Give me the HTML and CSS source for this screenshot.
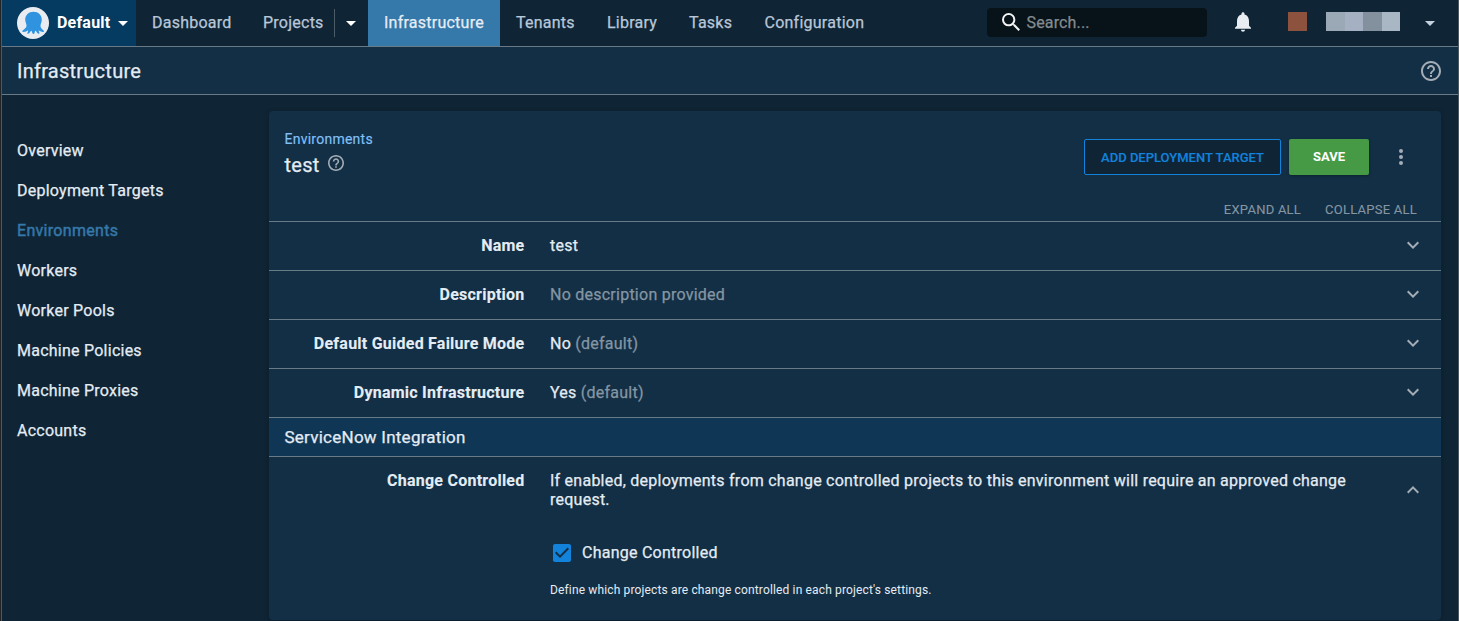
FILE: index.html
```html
<!DOCTYPE html>
<html lang="en">
<head>
<meta charset="utf-8">
<title>Infrastructure</title>
<link rel="stylesheet" href="styles.css">
</head>
<body>
<div class="app">
  <header class="nav">
    <div class="space">
      <svg class="logo" viewBox="0 0 32 32"><circle cx="16" cy="16" r="16" fill="#e9edf2"/><path fill="#2f93e0" d="M16.500 4.800c-4.900 0-8.300 3.500-8.300 7.700 0 2.700 1.500 4.300 1.300 6.500-.3 2.600-4.500 4.400-4.300 5.400.4.900 3.400.5 5.200-.7.700-.4.900 0 .6.700-.4 1.200-1.100 2.100-.4 2.400 1 .4 2.400-1.300 3.100-2.500.6-.9 1-.6 1.200.3.300 1.200.7 2.500 1.600 2.500s1.200-1.400 1.400-2.500c.2-.9.700-1.100 1.200-.3.700 1.200 2 2.800 3 2.400.7-.3.100-1.400-.4-2.600-.3-.7 0-.8.600-.3 1.700 1.200 4.300 1.500 4.700.6.200-1-3.200-2.600-3.500-5.200-.2-2.200 1.300-3.800 1.300-6.500C24.800 8.300 21.400 4.800 16.500 4.800z"/></svg>
      <span class="space-name">Default</span>
      <svg class="caret" viewBox="0 0 10 5"><path d="M0 0h10L5 5z"/></svg>
    </div>
    <nav class="links">
      <a class="link dashboard">Dashboard</a>
      <a class="link projects">Projects</a>
      <span class="projects-menu"><svg class="caret" viewBox="0 0 10 5"><path d="M0 0h10L5 5z"/></svg></span>
      <a class="link active">Infrastructure</a>
      <a class="link tenants">Tenants</a>
      <a class="link library">Library</a>
      <a class="link tasks">Tasks</a>
      <a class="link">Configuration</a>
    </nav>
    <div class="tools">
      <div class="search">
        <svg class="search-icon" viewBox="3 3 17.500 17.500"><path d="M15.500 14h-.79l-.28-.27A6.471 6.471 0 0 0 16 9.500 6.500 6.500 0 1 0 9.500 16c1.610 0 3.090-.59 4.230-1.570l.27.28v.79l5 4.990L20.490 19l-4.990-5zm-6 0C7.010 14 5 11.990 5 9.500S7.010 5 9.500 5 14 7.010 14 9.500 11.990 14 9.500 14z"/></svg>
        <span class="search-text">Search...</span>
      </div>
      <svg class="bell" viewBox="4 2.500 16 19.500"><path d="M12 22c1.100 0 2-.9 2-2h-4c0 1.100.89 2 2 2zm6-6v-5c0-3.070-1.640-5.640-4.500-6.320V4c0-.83-.67-1.500-1.500-1.500s-1.500.67-1.500 1.500v.68C7.630 5.360 6 7.920 6 11v5l-2 2v1h16v-1l-2-2z"/></svg>
      <span class="avatar"></span>
      <span class="user"><i class="tone-a"></i><i class="tone-b"></i><i class="tone-c"></i><i class="tone-d"></i></span>
      <svg class="caret user-caret" viewBox="0 0 10 5"><path d="M0 0h10L5 5z"/></svg>
    </div>
  </header>
  <div class="title-bar">
    <h1 class="title">Infrastructure</h1>
    <svg class="help" viewBox="2 2 20 20"><path d="M11 18h2v-2h-2v2zm1-16C6.480 2 2 6.480 2 12s4.480 10 10 10 10-4.480 10-10S17.520 2 12 2zm0 18c-4.410 0-8-3.590-8-8s3.590-8 8-8 8 3.590 8 8-3.590 8-8 8zm0-14c-2.210 0-4 1.790-4 4h2c0-1.100.9-2 2-2s2 .9 2 2c0 2-3 1.750-3 5h2c0-2.250 3-2.500 3-5 0-2.210-1.790-4-4-4z"/></svg>
  </div>
  <div class="content">
    <aside class="side">
      <a>Overview</a>
      <a>Deployment Targets</a>
      <a class="current">Environments</a>
      <a>Workers</a>
      <a>Worker Pools</a>
      <a>Machine Policies</a>
      <a>Machine Proxies</a>
      <a>Accounts</a>
    </aside>
    <main class="card">
      <div class="card-head">
        <div class="heading">
          <a class="crumb">Environments</a>
          <div class="name-line"><h2 class="name">test</h2>
            <svg class="help small" viewBox="2 2 20 20"><path d="M11 18h2v-2h-2v2zm1-16C6.480 2 2 6.480 2 12s4.480 10 10 10 10-4.480 10-10S17.520 2 12 2zm0 18c-4.410 0-8-3.590-8-8s3.590-8 8-8 8 3.590 8 8-3.590 8-8 8zm0-14c-2.210 0-4 1.790-4 4h2c0-1.100.9-2 2-2s2 .9 2 2c0 2-3 1.750-3 5h2c0-2.250 3-2.500 3-5 0-2.210-1.790-4-4-4z"/></svg>
          </div>
        </div>
        <div class="actions">
          <button class="btn outline">ADD DEPLOYMENT TARGET</button>
          <button class="btn save">SAVE</button>
          <svg class="more" viewBox="0 0 4 16"><circle cx="2" cy="2" r="2"/><circle cx="2" cy="8" r="2"/><circle cx="2" cy="14" r="2"/></svg>
        </div>
      </div>
      <div class="expanders"><span class="expand">EXPAND ALL</span><span class="collapse">COLLAPSE ALL</span></div>
      <div class="row"><b class="label">Name</b><span class="value">test</span><svg class="chev" viewBox="6 8 12 8"><path d="M7.410 8.590 12 13.170l4.590-4.580L18 10l-6 6-6-6z"/></svg></div>
      <div class="row"><b class="label">Description</b><span class="value muted">No description provided</span><svg class="chev" viewBox="6 8 12 8"><path d="M7.410 8.590 12 13.170l4.590-4.580L18 10l-6 6-6-6z"/></svg></div>
      <div class="row"><b class="label">Default Guided Failure Mode</b><span class="value">No <span class="muted">(default)</span></span><svg class="chev" viewBox="6 8 12 8"><path d="M7.410 8.590 12 13.170l4.590-4.580L18 10l-6 6-6-6z"/></svg></div>
      <div class="row"><b class="label">Dynamic Infrastructure</b><span class="value">Yes <span class="muted">(default)</span></span><svg class="chev" viewBox="6 8 12 8"><path d="M7.410 8.590 12 13.170l4.590-4.580L18 10l-6 6-6-6z"/></svg></div>
      <h3 class="section">ServiceNow Integration</h3>
      <div class="row open">
        <b class="label">Change Controlled</b>
        <div class="value">
          <p class="summary">If enabled, deployments from change controlled projects to this environment will require an approved change request.</p>
          <div class="check-line">
            <svg class="check" viewBox="3 3 18 18"><path d="M19 3H5c-1.110 0-2 .9-2 2v14c0 1.100.89 2 2 2h14c1.110 0 2-.9 2-2V5c0-1.100-.89-2-2-2zm-9 14l-5-5 1.410-1.410L10 14.170l7.590-7.590L19 8l-9 9z"/></svg>
            <span>Change Controlled</span>
          </div>
          <p class="note">Define which projects are change controlled in each project's settings.</p>
        </div>
        <svg class="chev up" viewBox="6 8 12 8"><path d="M7.410 8.590 12 13.170l4.590-4.580L18 10l-6 6-6-6z"/></svg>
      </div>
    </main>
  </div>
</div>
</body>
</html>
```
FILE: styles.css
```css
* { box-sizing: border-box; }
body {
  margin: 0;
  height: 621px;
  overflow: hidden;
  background: #222426;
  color: #e4ecf4;
  font: 400 16px/19px Roboto, sans-serif;
  letter-spacing: .245px;
  -webkit-text-stroke: .25px;
}
h1, h2, h3, p { margin: 0; font-weight: inherit; }
svg { display: block; flex: none; }

.app {
  height: 621px;
  margin-left: 1px;
  border-left: 1px solid #4c5960;
  border-right: 1px solid #4c5960;
  background: #0f2535;
}

.nav {
  display: flex;
  height: 47px;
  border-bottom: 1px solid #687a86;
}
.space {
  display: flex;
  align-items: center;
  width: 134px;
  padding-left: 15px;
  background: #053a61;
  color: #fff;
}
.logo { width: 32px; height: 32px; margin-right: 8px; }
.space-name {
  width: 61px;
  padding-bottom: 1px;
  font-weight: 700;
  letter-spacing: .2px;
  white-space: nowrap;
  -webkit-text-stroke: 0;
}
.caret { width: 10px; height: 5px; fill: #fff; }
.space .caret { margin-top: 1px; }
.links { display: flex; color: #b9c7d9; }
.link { padding: 13px 16px 0; white-space: nowrap; }
.dashboard { width: 111px; }
.projects { width: 87px; padding-right: 0; }
.projects-menu {
  display: flex;
  align-self: center;
  align-items: center;
  width: 34px;
  height: 28px;
  padding: 1px 0 0 11px;
  border-left: 1px solid #4b5c69;
}
.active { width: 132px; background: #3578aa; color: #e6edf5; }
.tenants { width: 91px; }
.library { width: 82px; }
.tasks { width: 75.5px; }
.tools { display: flex; align-items: center; margin-left: auto; padding: 0 23px 2px 0; }
.search {
  display: flex;
  align-items: center;
  width: 220px;
  height: 29px;
  margin-right: 28px;
  padding-left: 15px;
  border-radius: 4px;
  background: #081219;
  color: #858b8f;
  letter-spacing: .15px;
}
.search-icon { width: 18px; height: 18px; margin-right: 6.5px; fill: #f2f3f3; }
.bell { width: 16px; height: 20px; fill: #e9edf2; }
.avatar { width: 19px; height: 19px; margin: -1px 19px 0 37px; background: #8d523e; }
.user { display: flex; width: 74px; height: 19px; margin: -1px 25px 0 0; }
.user i { flex: 1; }
.tone-a { background: #9ba9b6; }
.tone-b { background: #a5b1c3; }
.tone-c { background: #83919e; }
.tone-d { background: #a9b6c4; }
.user-caret { margin-top: 3px; fill: #c3d0de; }

.title-bar {
  display: flex;
  align-items: center;
  justify-content: space-between;
  height: 48px;
  padding: 0 17px 0 15px;
  border-bottom: 1px solid #687a86;
  background: #132f45;
}
.title { font-size: 20px; line-height: 24px; letter-spacing: .25px; }
.help { width: 20px; height: 20px; fill: #a4adb6; }
.help.small { width: 16px; height: 16px; }

.content { display: flex; }
.side {
  display: flex;
  flex-direction: column;
  gap: 21px;
  width: 267px;
  padding: 46px 0 0 15px;
}
.side .current { color: #3578aa; letter-spacing: .3px; -webkit-text-stroke: .45px; }

.card {
  width: 1172px;
  height: 509px;
  margin-top: 16px;
  border-radius: 4px;
  background: #132f45;
  box-shadow: 0 1px 5px rgba(0, 0, 0, .25);
}
.card-head { display: flex; justify-content: space-between; padding: 19px 38px 0 15.5px; height: 88px; }
.crumb { display: block; color: #80c0f8; font-size: 14px; line-height: 18px; -webkit-text-stroke: .15px; }
.name-line { display: flex; align-items: center; gap: 8.5px; margin-top: 5px; }
.name { font-size: 20px; line-height: 24px; }
.name-line .small { margin-top: -4px; }
.actions { display: flex; height: 36px; margin-top: 9px; }
.btn {
  height: 36px;
  padding: 0;
  border: 0;
  border-radius: 2px;
  font: 500 13px/34px Roboto, sans-serif;
  white-space: nowrap;
  -webkit-text-stroke: .15px;
}
.outline {
  width: 197px;
  padding-top: 1px;
  border: 1px solid #1282db;
  background: #0f2535;
  color: #1282db;
}
.save {
  width: 80px;
  margin-left: 8px;
  background: #469a45;
  color: #fff;
  font-weight: 700;
  box-shadow: 0 1px 3px rgba(0, 0, 0, .3);
  -webkit-text-stroke: 0;
}
.more { width: 4px; height: 16px; margin: 10px 0 0 30px; fill: #a4adb6; }
.expanders {
  display: flex;
  justify-content: flex-end;
  gap: 24px;
  height: 22px;
  padding: 1px 24px 0 0;
  color: #8596a3;
  font-size: 13px;
  letter-spacing: .24px;
  -webkit-text-stroke: .1px;
}

.row {
  display: flex;
  align-items: center;
  height: 49px;
  padding: 0 22px 2px 0;
  border-top: 1px solid #687a86;
}
.label {
  width: 255.5px;
  text-align: right;
  font-weight: 700;
  letter-spacing: .24px;
  -webkit-text-stroke: .1px;
}
.value { flex: 1; margin-left: 25.5px; }
.muted { color: #8596a3; }
.chev { width: 12px; height: 8px; fill: #a4adb6; }
.section {
  height: 39px;
  padding: 10px 15.5px 0;
  border-top: 1px solid #687a86;
  background: #103655;
  font-size: 17px;
}
.open { align-items: flex-start; height: auto; padding-top: 14px; }
.summary { width: 820px; }
.check-line { display: flex; align-items: center; gap: 11px; margin: 34px 0 0 3px; }
.check { width: 18px; height: 18px; fill: #1282db; }
.note { margin-top: 19px; font-size: 12px; letter-spacing: .145px; -webkit-text-stroke: 0; }
.up { margin-top: 15px; transform: rotate(180deg); }
```
